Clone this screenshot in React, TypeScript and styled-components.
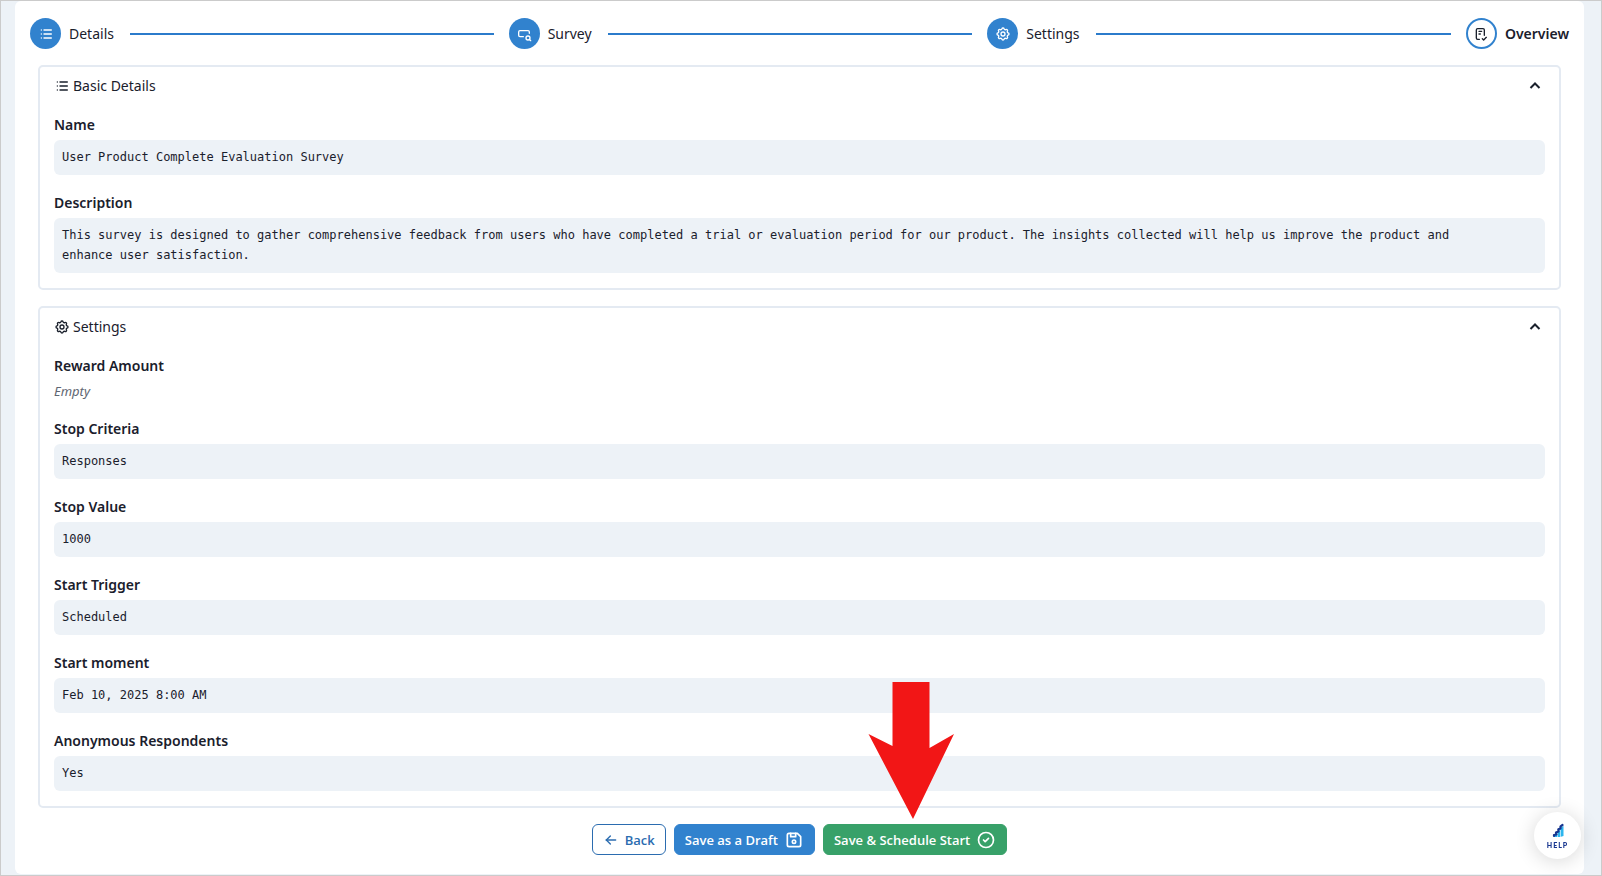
import React, { useState } from 'react';
import styled, { createGlobalStyle, css } from 'styled-components';
import {
  TbArrowLeft,
  TbChecklist,
  TbCircleCheck,
  TbDeviceFloppy,
  TbInputSearch,
  TbList,
  TbSettings,
} from 'react-icons/tb';
import type { IconType } from 'react-icons';

const color = {
  blue: '#3182ce',
  line: '#2b7bcb',
  blueText: '#2b6cb0',
  green: '#38a169',
  ink: '#1a202c',
  muted: '#606672',
  wash: '#edf2f7',
  border: '#e4eaf2',
  frame: '#cbcbcb',
  arrow: '#f21616',
  navy: '#17358f',
  sky: '#2cb5ee',
};

const GlobalStyle = createGlobalStyle`
  *, *::before, *::after { box-sizing: border-box; }
  body {
    margin: 0;
    color: ${color.ink};
    background: ${color.wash};
    font: 400 14px/24px 'Noto Sans', 'Open Sans', sans-serif;
  }
`;

const Page = styled.div`
  min-height: 100vh;
  padding: 0 17px 1px 14px;
  border: 1px solid ${color.frame};
  display: flex;
  flex-direction: column;
`;

const Panel = styled.main`
  flex: 1;
  background: #fff;
  border-radius: 6px;
  padding: 17px 15px 18px;
  display: flex;
  flex-direction: column;
`;

const StepList = styled.ol`
  list-style: none;
  margin: 0;
  padding: 0;
  display: flex;
  gap: 15px;
`;

const Step = styled.li<{ $last?: boolean }>`
  flex: ${(p) => (p.$last ? '0 0 auto' : '1 0 0')};
  display: flex;
  align-items: center;
  gap: 8px;
`;

const StepMark = styled.span<{ $active?: boolean }>`
  width: 31px;
  height: 31px;
  border-radius: 50%;
  display: grid;
  place-items: center;
  flex: none;
  ${(p) =>
    p.$active
      ? css`
          border: 2px solid ${color.blue};
          color: ${color.ink};
        `
      : css`
          background: ${color.blue};
          color: #fff;
        `}
`;

const StepTitle = styled.span<{ $active?: boolean }>`
  font-weight: ${(p) => (p.$active ? 600 : 400)};
`;

const StepLine = styled.span`
  flex: 1;
  height: 2px;
  margin-left: 8px;
  background: ${color.line};
`;

const Cards = styled.div`
  margin: 16px 8px 0;
  display: flex;
  flex-direction: column;
  gap: 16px;
`;

const Card = styled.section`
  border: 2px solid ${color.border};
  border-radius: 5px;
`;

const CardToggle = styled.button`
  width: 100%;
  height: 38px;
  padding: 0 14px;
  border: 0;
  background: none;
  color: inherit;
  font: inherit;
  text-align: left;
  display: flex;
  align-items: center;
  gap: 3px;
  cursor: pointer;

  span {
    flex: 1;
  }
`;

const Chevron = styled.svg<{ $open: boolean }>`
  width: 20px;
  height: 20px;
  fill: none;
  stroke: currentColor;
  stroke-width: 2;
  transform: rotate(${(p) => (p.$open ? 0 : 180)}deg);
`;

const Fields = styled.dl`
  margin: 0;
  padding: 8px 14px 15px;
  display: flex;
  flex-direction: column;
  gap: 16px;
`;

const Field = styled.div`
  display: flex;
  flex-direction: column;
  gap: 3px;
`;

const Label = styled.dt`
  font-weight: 600;
`;

const Value = styled.dd`
  margin: 0;
  padding: 7px 8px 8px;
  border-radius: 6px;
  background: ${color.wash};
  font: 400 12px/20px 'DejaVu Sans Mono', monospace;
`;

const ValueText = styled.div`
  max-width: 198ch;
`;

const Empty = styled.dd`
  margin: 0;
  color: ${color.muted};
  font-size: 13px;
  font-style: italic;
  line-height: 20px;
`;

const Actions = styled.div`
  margin-top: 16px;
  display: flex;
  justify-content: center;
  gap: 8px;
`;

const Button = styled.button<{ $tone: 'outline' | 'blue' | 'green' }>`
  height: 31px;
  padding: 0 10px;
  border: 1px solid ${(p) => (p.$tone === 'outline' ? color.blueText : color[p.$tone])};
  border-radius: 6px;
  background: ${(p) => (p.$tone === 'outline' ? '#fff' : color[p.$tone])};
  color: ${(p) => (p.$tone === 'outline' ? color.blueText : '#fff')};
  font: 600 13px/20px 'Open Sans', 'Noto Sans', sans-serif;
  display: inline-flex;
  align-items: center;
  gap: 6px;
  cursor: pointer;
`;

const PointerArrow = styled.svg`
  position: fixed;
  left: calc(50% + 67px);
  bottom: 57px;
  width: 87px;
  height: 138px;
  pointer-events: none;
`;

const HelpButton = styled.button`
  position: fixed;
  right: 21px;
  bottom: 17px;
  width: 47px;
  height: 47px;
  padding: 0;
  border: 0;
  border-radius: 50%;
  background: #fff;
  box-shadow: 0 2px 20px rgba(0, 0, 0, 0.16);
  color: ${color.navy};
  font: 900 7px/8px 'Lato', sans-serif;
  letter-spacing: 1px;
  display: flex;
  flex-direction: column;
  align-items: center;
  justify-content: center;
  gap: 3px;
  cursor: pointer;
`;

const steps: { title: string; icon: IconType }[] = [
  { title: 'Details', icon: TbList },
  { title: 'Survey', icon: TbInputSearch },
  { title: 'Settings', icon: TbSettings },
  { title: 'Overview', icon: TbChecklist },
];

const basicDetails = [
  { label: 'Name', value: 'User Product Complete Evaluation Survey' },
  {
    label: 'Description',
    value:
      'This survey is designed to gather comprehensive feedback from users who have completed a trial or evaluation period for our product. The insights collected will help us improve the product and enhance user satisfaction.',
  },
];

const settings = [
  { label: 'Reward Amount', value: '' },
  { label: 'Stop Criteria', value: 'Responses' },
  { label: 'Stop Value', value: '1000' },
  { label: 'Start Trigger', value: 'Scheduled' },
  { label: 'Start moment', value: 'Feb 10, 2025 8:00 AM' },
  { label: 'Anonymous Respondents', value: 'Yes' },
];

function Stepper({ current }: { current: number }) {
  return (
    <StepList>
      {steps.map(({ title, icon: Icon }, i) => {
        const active = i === current;
        const last = i === steps.length - 1;
        return (
          <Step key={title} $last={last} aria-current={active ? 'step' : undefined}>
            <StepMark $active={active}>
              <Icon size={16} />
            </StepMark>
            <StepTitle $active={active}>{title}</StepTitle>
            {!last && <StepLine />}
          </Step>
        );
      })}
    </StepList>
  );
}

function Section({
  title,
  icon: Icon,
  fields,
}: {
  title: string;
  icon: IconType;
  fields: { label: string; value: string }[];
}) {
  const [open, setOpen] = useState(true);
  return (
    <Card>
      <CardToggle type="button" aria-expanded={open} onClick={() => setOpen(!open)}>
        <Icon size={16} />
        <span>{title}</span>
        <Chevron $open={open} viewBox="0 0 20 20" aria-hidden="true">
          <path d="M5.500 12L10 7.500L14.500 12" />
        </Chevron>
      </CardToggle>
      {open && (
        <Fields>
          {fields.map((f) => (
            <Field key={f.label}>
              <Label>{f.label}</Label>
              {f.value ? (
                <Value>
                  <ValueText>{f.value}</ValueText>
                </Value>
              ) : (
                <Empty>Empty</Empty>
              )}
            </Field>
          ))}
        </Fields>
      )}
    </Card>
  );
}

function HelpLogo() {
  return (
    <svg width="12" height="15" viewBox="0 0 12 15" aria-hidden="true">
      <path d="M2 12L5 10V14H2zM5 9L8 7V14L5 14zM8 5L11.5 3V13L8 14z" fill={color.sky} />
      <path d="M5.500 10V14M8.500 7V14" stroke="#fff" strokeWidth="0.6" />
      <path
        d="M2 13L2 12L4.500 11.500L4 9.500L6.500 8.500L6.300 6.300L8.500 5.500L8.500 3.300L10.500 2"
        fill="none"
        stroke={color.navy}
        strokeWidth="2.200"
        strokeLinecap="round"
        strokeLinejoin="round"
      />
    </svg>
  );
}

export default function App() {
  return (
    <>
      <GlobalStyle />
      <Page>
        <Panel>
          <Stepper current={3} />
          <Cards>
            <Section title="Basic Details" icon={TbList} fields={basicDetails} />
            <Section title="Settings" icon={TbSettings} fields={settings} />
          </Cards>
          <Actions>
            <Button type="button" $tone="outline">
              <TbArrowLeft size={16} />
              Back
            </Button>
            <Button type="button" $tone="blue">
              Save as a Draft
              <TbDeviceFloppy size={20} />
            </Button>
            <Button type="button" $tone="green">
              Save &amp; Schedule Start
              <TbCircleCheck size={20} />
            </Button>
          </Actions>
        </Panel>
      </Page>
      <PointerArrow viewBox="0 0 87 138" aria-hidden="true">
        <path d="M24.500 1H61.500V67L86 53L45 138L0.500 53L24.500 65Z" fill={color.arrow} />
      </PointerArrow>
      <HelpButton type="button">
        <HelpLogo />
        HELP
      </HelpButton>
    </>
  );
}
